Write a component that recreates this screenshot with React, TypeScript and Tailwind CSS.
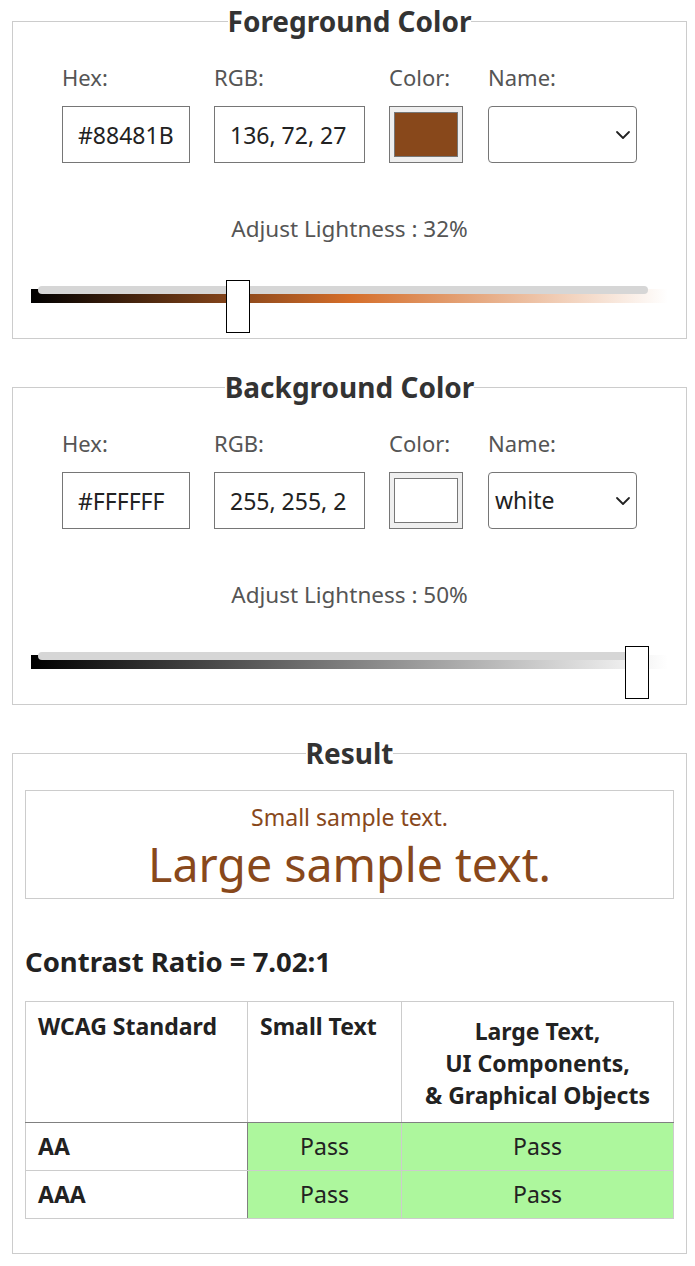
import React from 'react';

interface ColorPanelProps {
  title: string;
  hex: string;
  rgb: string;
  name: string;
  lightness: number;
  thumbLeft: number;
  gradientClass: string;
}

const Chevron = () => (
  <svg width="16" height="10" viewBox="0 0 16 10" fill="none" stroke="#222" strokeWidth="1.8" strokeLinecap="round" strokeLinejoin="round">
    <path d="M2 2l6 6 6-6" />
  </svg>
);

const ColorPanel: React.FC<ColorPanelProps> = ({ title, hex, rgb, name, lightness, thumbLeft, gradientClass }) => {
  return (
    <fieldset className="border border-[#cccccc] p-0 m-0 min-w-0">
      <legend className="mx-auto px-0 text-[28px] leading-[36px] font-bold text-[#333]">{title}</legend>
      <div className="pt-[22px] pb-[5px]">
        {/* inputs row */}
        <div className="flex gap-[24px] pl-[49px]">
          <div className="flex flex-col">
            <label className="text-[22px] leading-[33px] text-[#555]">Hex:</label>
            <input readOnly value={hex} className="mt-[12px] w-[128px] h-[57px] border border-[#767676] pl-[15px] pr-[16px] text-[23px] text-[#222] bg-white outline-none" />
          </div>
          <div className="flex flex-col">
            <label className="text-[22px] leading-[33px] text-[#555]">RGB:</label>
            <input readOnly value={rgb} className="mt-[12px] w-[151px] h-[57px] border border-[#767676] pl-[15px] pr-[17px] text-[23px] text-[#222] bg-white outline-none" />
          </div>
          <div className="flex flex-col">
            <label className="text-[22px] leading-[33px] text-[#555]">Color:</label>
            <div className="mt-[12px] w-[74px] h-[57px] border border-[#767676] bg-[#efefef] px-[4px] py-[5px]">
              <div className="w-full h-full border border-[#777]" style={{ backgroundColor: hex }} />
            </div>
          </div>
          <div className="flex flex-col ml-[1px]">
            <label className="text-[22px] leading-[33px] text-[#555]">Name:</label>
            <div className="mt-[12px] w-[149px] h-[57px] border border-[#767676] rounded-[4px] bg-white flex items-center justify-between pl-[6px] pr-[5px] text-[23px] text-[#222]">
              <span>{name}</span>
              <Chevron />
            </div>
          </div>
        </div>

        <div className="mt-[49px] text-center text-[22.5px] leading-[33px] text-[#555]">
          Adjust Lightness : {lightness}%
        </div>

        {/* lightness slider */}
        <div className="relative mt-[35px] ml-[18px] w-[637px] h-[53px]">
          <div className={`absolute left-0 top-[9px] w-full h-[14px] ${gradientClass}`} />
          <div className="absolute left-[7px] top-[6px] w-[610px] h-[8px] rounded-full bg-[#d6d6d6]" />
          <div className="absolute top-0 w-[24px] h-[53px] bg-white border-[1.5px] border-black" style={{ left: thumbLeft }} />
        </div>
      </div>
    </fieldset>
  );
};

const results = [
  { level: 'AA', small: 'Pass', large: 'Pass' },
  { level: 'AAA', small: 'Pass', large: 'Pass' },
];

export default function App() {
  return (
    <div className="font-['Noto_Sans',sans-serif] bg-white pt-[3px] pl-[12px] pr-[8px] pb-[12px]">
      <ColorPanel
        title="Foreground Color"
        hex="#88481B"
        rgb="136, 72, 27"
        name=""
        lightness={32}
        thumbLeft={195}
        gradientClass="bg-[linear-gradient(to_right,#000000,#d56e2a,#ffffff)]"
      />

      <div className="mt-[30px]">
        <ColorPanel
          title="Background Color"
          hex="#FFFFFF"
          rgb="255, 255, 255"
          name="white"
          lightness={50}
          thumbLeft={594}
          gradientClass="bg-[linear-gradient(to_right,#000000,#808080,#ffffff)]"
        />
      </div>

      <fieldset className="mt-[30px] border border-[#cccccc] p-0 min-w-0">
        <legend className="mx-auto px-0 text-[28px] leading-[36px] font-bold text-[#333]">Result</legend>
        <div className="pt-[19px] px-[12px] pb-[34px]">
          <div className="border border-[#cccccc] text-center text-[#88481b] pt-[9px] pb-[3px]">
            <p className="text-[23px] leading-[34px]">Small sample text.</p>
            <p className="text-[46.5px] leading-[61px]">Large sample text.</p>
          </div>

          <h2 className="mt-[45px] text-[27.5px] leading-[36px] font-bold text-[#222]">Contrast Ratio = 7.02:1</h2>

          <table className="mt-[21px] w-full table-fixed border-collapse border border-[#cccccc] text-[#222]">
            <thead>
              <tr>
                <th className="w-[222px] align-top text-left px-[12px] pt-[8px] pb-[12px] text-[23px] leading-[32px] font-bold border border-[#cccccc] border-b-[#808080]">WCAG Standard</th>
                <th className="w-[154px] align-top text-left px-[12px] pt-[8px] pb-[12px] text-[23px] leading-[32px] font-bold border border-[#cccccc] border-b-[#808080]">Small Text</th>
                <th className="align-top text-center px-[10px] pt-[13px] pb-[11px] text-[23px] leading-[32px] font-bold border border-[#cccccc] border-b-[#808080]">
                  Large Text,<br />UI Components,<br />&amp; Graphical Objects
                </th>
              </tr>
            </thead>
            <tbody>
              {results.map(r => (
                <tr key={r.level}>
                  <th className="text-left px-[12px] py-[7px] text-[23px] leading-[33px] font-bold border border-[#cccccc] border-r-[#808080]">{r.level}</th>
                  <td className="text-center py-[7px] text-[23px] leading-[33px] bg-[#adf79d] border border-[#cccccc]">{r.small}</td>
                  <td className="text-center py-[7px] text-[23px] leading-[33px] bg-[#adf79d] border border-[#cccccc]">{r.large}</td>
                </tr>
              ))}
            </tbody>
          </table>
        </div>
      </fieldset>
    </div>
  );
}
